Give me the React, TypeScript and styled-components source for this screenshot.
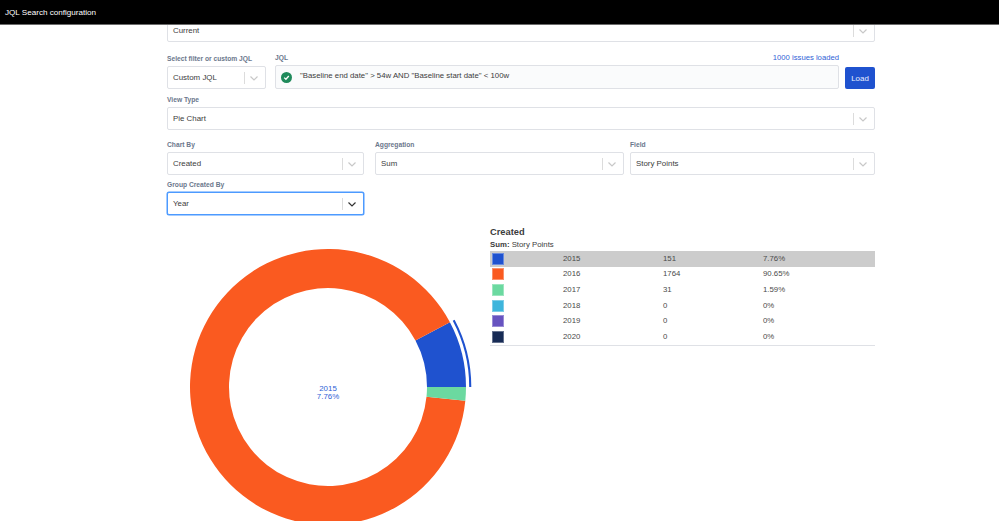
import styled, { createGlobalStyle } from "styled-components";

const GlobalStyle = createGlobalStyle`
  html, body {
    margin: 0;
    height: 100%;
    overflow: hidden;
    background: #fff;
    font-family: "Liberation Sans", Arial, sans-serif;
    color: #3c3c3c;
  }
`;

const Page = styled.div`
  display: flex;
  flex-direction: column;
  height: 521px;
  overflow: hidden;
`;

const Header = styled.header`
  position: relative;
  z-index: 2;
  flex: none;
  display: flex;
  align-items: center;
  height: 24px;
  padding-left: 5px;
  background: #000;
  border-bottom: 1px solid #6b6b6b;
  color: #fff;
  font-size: 8.1px;
`;

const Content = styled.main`
  width: 708px;
  margin: -6px 0 0 167px;
`;

const Label = styled.label`
  display: block;
  height: 10px;
  margin-bottom: 2px;
  color: #6b778c;
  font-size: 6.7px;
  font-weight: 700;
  line-height: 9px;
  white-space: nowrap;
`;

const SelectBox = styled.div<{ $focused?: boolean }>`
  box-sizing: border-box;
  display: flex;
  align-items: center;
  height: 23px;
  padding: 0 2px 0 5px;
  background: #fff;
  border: 1px solid ${(p) => (p.$focused ? "#4c9aff" : "#dfe1e6")};
  border-radius: 2px;
  box-shadow: ${(p) => (p.$focused ? "0 0 0 0.5px #4c9aff" : "none")};
  font-size: 7.9px;
`;

const SelectValue = styled.span`
  flex: 1;
  padding-bottom: 1px;
  white-space: nowrap;
`;

const Separator = styled.span`
  width: 1px;
  height: 12px;
  background: #dcdcdc;
`;

const Chevron = styled.svg<{ $focused?: boolean }>`
  width: 18px;
  height: 12px;
  fill: none;
  stroke: ${(p) => (p.$focused ? "#333" : "#c8c8c8")};
  stroke-width: 1.2;
`;

const FilterRow = styled.div`
  display: grid;
  grid-template-columns: 99px 564px 30px;
  column-gap: 9px;
  margin-top: 11px;
  align-items: end;
`;

const LoadedRow = styled.div`
  display: flex;
  justify-content: space-between;
`;

const Loaded = styled.span`
  color: #2f62d6;
  font-size: 7.7px;
  line-height: 10px;
`;

const JqlBox = styled.div`
  box-sizing: border-box;
  display: flex;
  align-items: center;
  gap: 8px;
  height: 24px;
  padding-left: 5px;
  background: #fafbfc;
  border: 1px solid #dfe1e6;
  border-radius: 2px;
  font-size: 7.8px;
`;

const JqlText = styled.span`
  padding-bottom: 3px;
`;

const LoadButton = styled.button`
  height: 22px;
  width: 30px;
  margin-left: -3px;
  padding: 0;
  background: #1f52cf;
  border: none;
  border-radius: 2px;
  color: #e8eeff;
  font: 7.9px "Liberation Sans", Arial, sans-serif;
`;

const Section = styled.div`
  margin-top: 6px;
`;

const ChartByRow = styled.div`
  display: grid;
  grid-template-columns: 208px 255px 245px;
  margin-top: 10px;

  & > :nth-child(1) {
    padding-right: 11px;
  }

  & > :nth-child(2) {
    padding-right: 6px;
  }
`;

const GroupField = styled.div`
  width: 197px;
  margin-top: 5px;
`;

const ChartArea = styled.div`
  display: grid;
  grid-template-columns: 323px 385px;
  margin-top: 11px;
`;

const Donut = styled.svg`
  display: block;
  width: 322px;
  height: 322px;
  overflow: visible;
`;

const CenterText = styled.text`
  fill: #2f62d6;
  font-size: 7.9px;
  text-anchor: middle;
`;

const LegendTitle = styled.div`
  height: 13px;
  font-size: 9.3px;
  font-weight: 700;
  line-height: 12px;
`;

const LegendSub = styled.div`
  height: 12px;
  font-size: 7.8px;
  line-height: 11px;

  b {
    font-weight: 700;
  }
`;

const Table = styled.div`
  border-bottom: 1px solid #dfe1e6;
`;

const Row = styled.div<{ $active?: boolean }>`
  display: grid;
  grid-template-columns: 73px 100px 100px 112px;
  align-items: center;
  height: 15.6px;
  background: ${(p) => (p.$active ? "#cccccc" : "transparent")};
  font-size: 7.8px;
  color: #4a4a4a;

  span:not(:first-child) {
    padding-bottom: 1px;
  }
`;

const Swatch = styled.span<{ $color: string }>`
  box-sizing: border-box;
  display: block;
  width: 12px;
  height: 12px;
  margin-left: 2px;
  background: ${(p) => p.$color};
  border: 1px solid #ffffff55;
`;

const slices = [
  { year: "2015", value: 151, pct: "7.76%", share: 7.76, color: "#1f52cf" },
  { year: "2016", value: 1764, pct: "90.65%", share: 90.65, color: "#fa5a20" },
  { year: "2017", value: 31, pct: "1.59%", share: 1.59, color: "#6bd9a0" },
  { year: "2018", value: 0, pct: "0%", share: 0, color: "#3eb5dc" },
  { year: "2019", value: 0, pct: "0%", share: 0, color: "#6753c0" },
  { year: "2020", value: 0, pct: "0%", share: 0, color: "#172b55" },
];

const CX = 161;
const CY = 161;

function point(radius: number, deg: number) {
  const a = (deg * Math.PI) / 180;
  return `${CX + radius * Math.cos(a)} ${CY - radius * Math.sin(a)}`;
}

// slices run counter-clockwise from 3 o'clock
function ringPath(outer: number, inner: number, from: number, to: number) {
  const large = to - from > 180 ? 1 : 0;
  return [
    `M ${point(outer, from)}`,
    `A ${outer} ${outer} 0 ${large} 0 ${point(outer, to)}`,
    `L ${point(inner, to)}`,
    `A ${inner} ${inner} 0 ${large} 1 ${point(inner, from)}`,
    "Z",
  ].join(" ");
}

function Select({ value, focused }: { value: string; focused?: boolean }) {
  return (
    <SelectBox $focused={focused}>
      <SelectValue>{value}</SelectValue>
      <Separator />
      <Chevron $focused={focused} viewBox="0 0 18 12">
        <path d="M5.5 4.5 L9 8 L12.5 4.5" />
      </Chevron>
    </SelectBox>
  );
}

function PieChart() {
  let start = 0;
  const arcs = slices
    .filter((s) => s.share > 0)
    .map((s) => {
      const from = start;
      start += (s.share / 100) * 360;
      return { ...s, from, to: start };
    });
  return (
    <Donut viewBox="0 0 322 322">
      {arcs.map((a) => (
        <path key={a.year} d={ringPath(138, 99, a.from, a.to)} fill={a.color} />
      ))}
      <path d={ringPath(143.3, 141.2, arcs[0].from, arcs[0].to)} fill={arcs[0].color} />
      <CenterText x={CX} y={165}>2015</CenterText>
      <CenterText x={CX} y={173}>7.76%</CenterText>
    </Donut>
  );
}

export default function App() {
  return (
    <Page>
      <GlobalStyle />
      <Header>JQL Search configuration</Header>
      <Content>
        <Select value="Current" />
        <FilterRow>
          <div>
            <Label>Select filter or custom JQL</Label>
            <Select value="Custom JQL" />
          </div>
          <div>
            <LoadedRow>
              <Label>JQL</Label>
              <Loaded>1000 issues loaded</Loaded>
            </LoadedRow>
            <JqlBox>
              <svg width="11" height="11" viewBox="0 0 11 11">
                <circle cx="5.5" cy="5.5" r="5.5" fill="#1f8a5b" />
                <path d="M3.2 5.6 L4.9 7.2 L7.8 4" fill="none" stroke="#fff" strokeWidth="1.3" />
              </svg>
              <JqlText>
                &quot;Baseline end date&quot; &gt; 54w AND &quot;Baseline start date&quot; &lt; 100w
              </JqlText>
            </JqlBox>
          </div>
          <LoadButton>Load</LoadButton>
        </FilterRow>
        <Section>
          <Label>View Type</Label>
          <Select value="Pie Chart" />
        </Section>
        <ChartByRow>
          <div>
            <Label>Chart By</Label>
            <Select value="Created" />
          </div>
          <div>
            <Label>Aggregation</Label>
            <Select value="Sum" />
          </div>
          <div>
            <Label>Field</Label>
            <Select value="Story Points" />
          </div>
        </ChartByRow>
        <GroupField>
          <Label>Group Created By</Label>
          <Select value="Year" focused />
        </GroupField>
        <ChartArea>
          <PieChart />
          <div>
            <LegendTitle>Created</LegendTitle>
            <LegendSub>
              <b>Sum:</b> Story Points
            </LegendSub>
            <Table>
              {slices.map((s, i) => (
                <Row key={s.year} $active={i === 0}>
                  <Swatch $color={s.color} />
                  <span>{s.year}</span>
                  <span>{s.value}</span>
                  <span>{s.pct}</span>
                </Row>
              ))}
            </Table>
          </div>
        </ChartArea>
      </Content>
    </Page>
  );
}
